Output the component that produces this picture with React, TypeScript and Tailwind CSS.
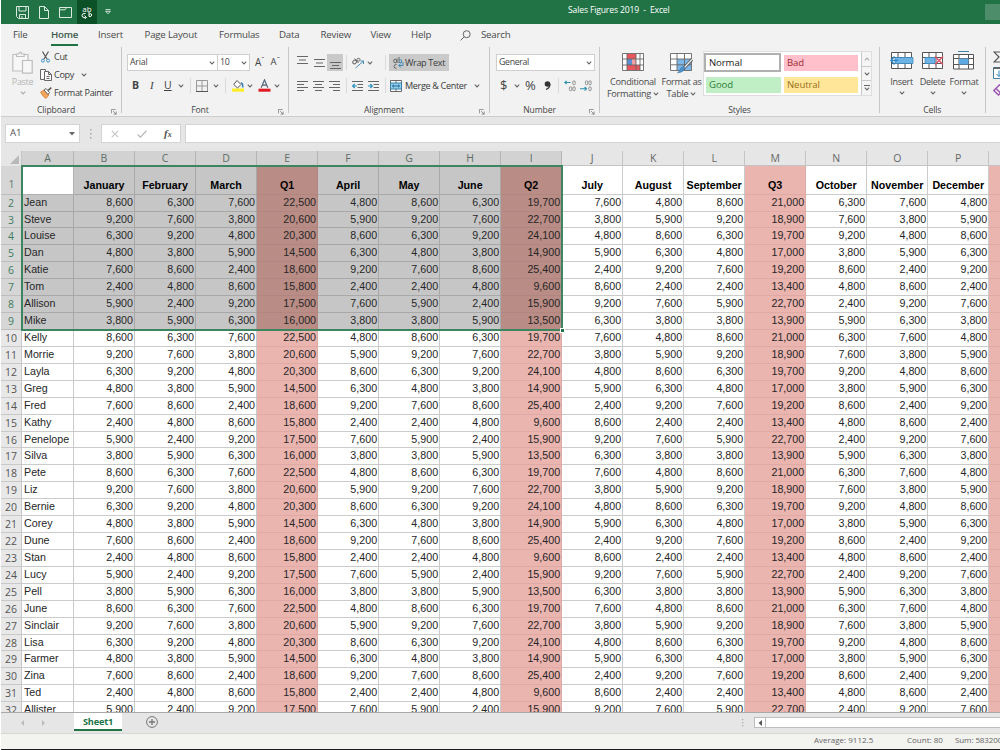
import type { ReactNode } from "react";
import clsx from "clsx";

const MONTHS = [
  "", "January", "February", "March", "Q1", "April", "May", "June", "Q2",
  "July", "August", "September", "Q3", "October", "November", "December",
];

const NAMES = [
  "Jean", "Steve", "Louise", "Dan", "Katie", "Tom", "Allison", "Mike",
  "Kelly", "Morrie", "Layla", "Greg", "Fred", "Kathy", "Penelope", "Silva",
  "Pete", "Liz", "Bernie", "Corey", "Dune", "Stan", "Lucy", "Pell",
  "June", "Sinclair", "Lisa", "Farmer", "Zina", "Ted", "Allister",
];

// Figures repeat every eight people
const FIGURES = [
  [8600, 6300, 7600, 22500, 4800, 8600, 6300, 19700, 7600, 4800, 8600, 21000, 6300, 7600, 4800],
  [9200, 7600, 3800, 20600, 5900, 9200, 7600, 22700, 3800, 5900, 9200, 18900, 7600, 3800, 5900],
  [6300, 9200, 4800, 20300, 8600, 6300, 9200, 24100, 4800, 8600, 6300, 19700, 9200, 4800, 8600],
  [4800, 3800, 5900, 14500, 6300, 4800, 3800, 14900, 5900, 6300, 4800, 17000, 3800, 5900, 6300],
  [7600, 8600, 2400, 18600, 9200, 7600, 8600, 25400, 2400, 9200, 7600, 19200, 8600, 2400, 9200],
  [2400, 4800, 8600, 15800, 2400, 2400, 4800, 9600, 8600, 2400, 2400, 13400, 4800, 8600, 2400],
  [5900, 2400, 9200, 17500, 7600, 5900, 2400, 15900, 9200, 7600, 5900, 22700, 2400, 9200, 7600],
  [3800, 5900, 6300, 16000, 3800, 3800, 5900, 13500, 6300, 3800, 3800, 13900, 5900, 6300, 3800],
];

const LETTERS = "ABCDEFGHIJKLMNOP".split("");
const COLS = "grid grid-cols-[21px_52px_repeat(15,61.03px)_12px]";

function Chevron({ className }: { className?: string }) {
  return (
    <svg viewBox="0 0 6 4" className={clsx("h-[4px] w-[6px] shrink-0", className)}>
      <path d="M0.8 0.7L3 2.9L5.2 0.7" fill="none" stroke="#666" strokeWidth="1.1" />
    </svg>
  );
}

function Launcher() {
  return (
    <svg viewBox="0 0 7 7" className="h-[6px] w-[6px]" fill="none" stroke="#777" strokeWidth="0.9">
      <path d="M0.5 5V0.5H5.5M2.5 2.5L6 6M6 3V6H3" />
    </svg>
  );
}

interface GroupProps {
  label: string;
  width: string;
  launcher?: boolean;
  children: ReactNode;
}

function Group({ label, width, launcher, children }: GroupProps) {
  return (
    <div className={clsx("flex h-[70px] shrink-0", width)}>
      <div className="flex min-w-0 flex-1 flex-col">
        <div className="h-[57px] shrink-0">{children}</div>
        <div className="flex h-[13px] items-center">
          <span className="flex-1 text-center text-[8.6px] tracking-[-0.1px] text-[#444]">{label}</span>
          {launcher && <span className="mt-[2px] w-[10px]"><Launcher /></span>}
        </div>
      </div>
      <div className="h-[66px] w-px bg-[#c6c6c6]" />
    </div>
  );
}

function Divider({ className }: { className?: string }) {
  return <span className={clsx("h-[15px] w-px shrink-0 bg-[#dadada]", className)} />;
}

function Lines({ d }: { d: string }) {
  return (
    <svg viewBox="0 0 11 12" className="h-[12px] w-[11px] shrink-0">
      <path d={d} stroke="#666" strokeWidth="1" />
    </svg>
  );
}

function TitleBar() {
  return (
    <header className="flex h-[24px] items-center bg-[#217346]">
      <div className="flex h-full w-[476px] items-center">
        <svg viewBox="0 0 13 13" className="ml-[15px] h-[13px] w-[13px]" fill="none" stroke="#dcebe2">
          <path d="M0.5 0.5H12.5V12.5H2.5L0.5 10.5ZM3 0.5V5H10V0.5M3.5 12.5V8.5H9.5V12.5M6 10V12" />
        </svg>
        <svg viewBox="0 0 10 13" className="ml-[10px] h-[13px] w-[10px]" fill="none" stroke="#dcebe2">
          <path d="M0.5 0.5H5.5L9.5 4.5V12.5H0.5ZM5.5 0.5V4.5H9.5" />
        </svg>
        <svg viewBox="0 0 13 11" className="ml-[10px] h-[11px] w-[13px]" fill="none" stroke="#dcebe2">
          <path d="M0.5 10.5V0.5H12.5V10.5ZM0.5 2.8H6L7.5 0.8" />
        </svg>
        <div className="ml-[5px] flex h-full w-[20px] flex-col items-center justify-center bg-[#0b5026] text-white">
          <span className="h-[7px] text-[8px] leading-[7px]">ab</span>
          <svg viewBox="0 0 12 7" className="h-[7px] w-[12px]" fill="none" stroke="#fff">
            <path d="M4.5 1.5H3Q1 1.5 1 3.5T3 5.5H4.5M3.5 3.5L5.5 5.5L3.5 7M8 0V4.5M8 2.5Q10.5 0.5 10.7 3Q10.5 5 8 4.5" />
          </svg>
        </div>
        <svg viewBox="0 0 6 6" className="ml-[8px] h-[6px] w-[6px]" fill="none" stroke="#dcebe2" strokeWidth="0.9">
          <path d="M0.5 0.6H5.5M0.6 2.3L3 4.8L5.4 2.3Z" />
        </svg>
      </div>
      <div className="ml-[91px] w-[110px] pb-[3px] text-[8.6px] tracking-[-0.15px] whitespace-pre text-white">Sales Figures 2019  -  Excel</div>
      <div className="ml-auto h-[16px] w-[15px] bg-[#4d8d69]" />
    </header>
  );
}

const TABS = [
  { name: "File", width: "w-[38px]" },
  { name: "Home", width: "w-[47px]" },
  { name: "Insert", width: "w-[46.5px]" },
  { name: "Page Layout", width: "w-[74.5px]" },
  { name: "Formulas", width: "w-[60px]" },
  { name: "Data", width: "w-[41.5px]" },
  { name: "Review", width: "w-[50px]" },
  { name: "View", width: "w-[40.5px]" },
  { name: "Help", width: "w-[49px]" },
];

function TabStrip() {
  return (
    <nav className="flex h-[23px] items-center pl-[12px] text-[9.7px] tracking-[-0.2px] text-[#4a4a4a]">
      {TABS.map((tab) => (
        <div key={tab.name} className={clsx("flex h-full items-center", tab.width)}>
          <span
            className={clsx(
              "flex h-[20px] items-center whitespace-nowrap",
              tab.name === "Home" && "border-b-2 border-[#217346] pt-[2px] font-semibold text-[#3c5a4a]"
            )}
          >
            {tab.name}
          </span>
        </div>
      ))}
      <svg viewBox="0 0 11 11" className="h-[11px] w-[11px]" fill="none" stroke="#666">
        <circle cx="6.7" cy="4.2" r="3.5" />
        <path d="M4.2 6.8L0.6 10.4" />
      </svg>
      <span className="ml-[10px]">Search</span>
    </nav>
  );
}

function Clipboard() {
  return (
    <Group label="Clipboard" width="w-[121px]" launcher>
      <div className="flex text-[9.1px] tracking-[-0.35px] text-[#3a3a3a]">
        <div className="flex w-[38px] flex-col items-center pt-[4px] pl-[5px] text-[#b5b5b5]">
          <svg viewBox="0 0 21 23" className="h-[23px] w-[21px]" fill="#f7f7f7" stroke="#bdbdbd" strokeWidth="1.2">
            <path d="M0.8 3.5H16V20H0.8Z" />
            <path d="M4.5 5.5V3H6.8Q8.3 -0.8 9.8 3H12.2V5.5Z" />
            <path d="M10.5 9.5H20.2V22.2H10.5Z" />
          </svg>
          <span className="mt-[2px] leading-[12px]">Paste</span>
          <Chevron className="mt-[3px] opacity-50" />
        </div>
        <div className="flex flex-col pt-[1px]">
          <div className="flex h-[18px] items-center">
            <svg viewBox="0 0 9 12" className="ml-[2px] h-[12px] w-[9px]" fill="none">
              <path d="M1.5 0.5L6 8M7.5 0.5L3 8" stroke="#555" strokeWidth="1.2" />
              <circle cx="1.9" cy="9.6" r="1.5" stroke="#3b8fc4" />
              <circle cx="7.1" cy="9.6" r="1.5" stroke="#3b8fc4" />
            </svg>
            <span className="ml-[4px]">Cut</span>
          </div>
          <div className="flex h-[18px] items-center">
            <svg viewBox="0 0 12 12" className="ml-[1px] h-[12px] w-[12px]" fill="#fafafa" stroke="#666">
              <path d="M0.5 0.5H5.5V10.5H0.5Z" />
              <path d="M4.5 2.5H8.5L11.5 5.5V11.5H4.5ZM8.5 2.5V5.5H11.5M6.5 7.5H9.5M6.5 9.5H9.5" />
            </svg>
            <span className="ml-[2px]">Copy</span>
            <Chevron className="ml-[7px]" />
          </div>
          <div className="flex h-[18px] items-center">
            <svg viewBox="0 0 12 12" className="ml-[1px] h-[12px] w-[12px]">
              <path d="M0.5 5L4 3L9 8L6 11.5Q3 10 0.5 5Z" fill="#f3a45c" stroke="#d27b30" strokeWidth="0.7" />
              <path d="M4 3L6 1.5L9.5 5.5L8 7.5Z" fill="#fff" stroke="#555" strokeWidth="0.9" />
              <path d="M8 3.5L11.3 0.6" stroke="#555" strokeWidth="1.6" />
            </svg>
            <span className="ml-[2px] whitespace-nowrap">Format Painter</span>
          </div>
        </div>
      </div>
    </Group>
  );
}

function FontGroup() {
  return (
    <Group label="Font" width="w-[167px]" launcher>
      <div className="flex flex-col pt-[7px] text-[#444]">
        <div className="flex h-[17px] items-center">
          <div className="ml-[5px] flex h-[17px] w-[91px] items-center justify-between border border-[#cfcfcf] bg-white px-[2px] text-[8.8px] tracking-[-0.2px]">
            Arial <Chevron />
          </div>
          <div className="flex h-[17px] w-[32px] items-center justify-between border border-l-0 border-[#cfcfcf] bg-white px-[2px] text-[8.8px] tracking-[-0.2px]">
            10 <Chevron />
          </div>
          <span className="ml-[5px] text-[10px]">A</span>
          <span className="mb-[7px] text-[8px] leading-[6px]">ˆ</span>
          <span className="ml-[6px] text-[9.5px]">A</span>
          <span className="mb-[7px] text-[8px] leading-[6px]">ˇ</span>
        </div>
        <div className="mt-[6px] flex h-[17px] items-center">
          <span className="ml-[10px] w-[16px] text-[10.5px] font-bold">B</span>
          <span className="w-[16px] pl-[2px] font-['Liberation_Serif',serif] text-[11px] italic">I</span>
          <span className="w-[14px] text-[10.5px] underline">U</span>
          <Chevron className="ml-0" />
          <Divider className="ml-[6px]" />
          <svg viewBox="0 0 12 12" className="ml-[5px] h-[12px] w-[12px]" fill="none" stroke="#999">
            <path d="M0.5 0.5H11.5V11.5H0.5ZM6 0.5V11.5M0.5 6H11.5" />
            <path d="M0 11.5H12" stroke="#555" />
          </svg>
          <Chevron className="ml-[5px]" />
          <Divider className="ml-[6px]" />
          <svg viewBox="0 0 12 13" className="ml-[6px] h-[13px] w-[12px]">
            <rect x="0" y="9.5" width="12" height="3.2" fill="#f9ee2b" />
            <path d="M5 1.5L9 5.5L5.5 9L1.8 5.4Z" fill="#fff" stroke="#555" />
            <path d="M9 3.5Q11.5 5 10.6 8.5" fill="none" stroke="#2b7cb8" strokeWidth="1.4" />
          </svg>
          <Chevron className="ml-[3px]" />
          <svg viewBox="0 0 13 13" className="ml-[5px] h-[13px] w-[13px]">
            <rect x="0.5" y="9.7" width="12" height="3" fill="#e01b24" />
            <path d="M3.2 8.8L6.5 0.8L9.8 8.8M4.3 6.1H8.7" fill="none" stroke="#4c6275" strokeWidth="1.1" />
          </svg>
          <Chevron className="ml-[3px]" />
        </div>
      </div>
    </Group>
  );
}

function Indent({ flip }: { flip?: boolean }) {
  return (
    <svg viewBox="0 0 11 12" className="h-[12px] w-[11px] shrink-0">
      <path d="M0 1.5H11M5.5 4.5H11M5.5 7.5H11M0 10.5H11" stroke="#666" />
      <path d={flip ? "M0 6H4M2.3 4L4.3 6L2.3 8" : "M0.8 6H5M2.7 4L0.7 6L2.7 8"} fill="none" stroke="#2b8fc4" strokeWidth="1.2" />
    </svg>
  );
}

function Alignment() {
  return (
    <Group label="Alignment" width="w-[201px]" launcher>
      <div className="flex flex-col pt-[7px] text-[9.1px] tracking-[-0.35px] text-[#3a3a3a]">
        <div className="flex h-[17px] items-center">
          <div className="mb-[4px] ml-[8px] flex"><Lines d="M0 1.5H11M2 5H9M0 8.5H11" /></div>
          <div className="ml-[6px] flex"><Lines d="M0 2.5H11M2 6H9M0 9.5H11" /></div>
          <div className="ml-[2px] flex h-[17px] w-[16px] items-end justify-center bg-[#c9c9c9]">
            <Lines d="M0 3.5H11M2 6.5H9M0 9.5H11" />
          </div>
          <Divider className="ml-[3px]" />
          <svg viewBox="0 0 13 12" className="ml-[5px] h-[12px] w-[13px]" fill="none" stroke="#666">
            <ellipse cx="2.6" cy="5" rx="2" ry="1.6" transform="rotate(-45 2.6 5)" />
            <path d="M2.5 1.5L6.5 6" />
            <ellipse cx="6.5" cy="2.7" rx="1.6" ry="1.4" />
            <path d="M3.5 11L11.5 4M11.5 7V4H8.5" stroke="#4a8fb5" />
          </svg>
          <Chevron className="ml-[2px]" />
          <Divider className="ml-[12px]" />
          <div className="ml-[3px] flex h-[17px] w-[60px] items-center bg-[#cacaca] pl-[4px]">
            <svg viewBox="0 0 11 12" className="h-[12px] w-[11px] shrink-0" fill="none" stroke="#666">
              <ellipse cx="2.2" cy="4" rx="1.5" ry="1.8" />
              <path d="M4 1.5V6M6 0V6M3.5 7.5Q1 7.5 1 9.5T3.5 11.3" />
              <path d="M6 3Q9.5 1.8 8.5 5.5H6M10 5V8.5H6M7.8 6.5L5.8 8.5L7.8 10.5" stroke="#3a8ab8" />
            </svg>
            <span className="ml-[1px] whitespace-nowrap">Wrap Text</span>
          </div>
        </div>
        <div className="mt-[6px] flex h-[17px] items-center">
          <div className="ml-[8px] flex"><Lines d="M0 1.5H11M0 4.5H7M0 7.5H11M0 10.5H7" /></div>
          <div className="ml-[5px] flex"><Lines d="M0 1.5H11M2 4.5H9M0 7.5H11M2 10.5H9" /></div>
          <div className="ml-[5px] flex"><Lines d="M0 1.5H11M4 4.5H11M0 7.5H11M4 10.5H11" /></div>
          <Divider className="ml-[6px]" />
          <div className="ml-[5px] flex"><Indent /></div>
          <div className="ml-[5px] flex"><Indent flip /></div>
          <Divider className="ml-[6px]" />
          <svg viewBox="0 0 12 12" className="ml-[4px] h-[12px] w-[12px] shrink-0" fill="none">
            <path d="M0.5 0.5H11.5V11.5H0.5ZM6 0.5V3M6 9V11.5" fill="#fff" stroke="#666" />
            <rect x="0.5" y="3" width="11" height="6" fill="#8fd0ee" stroke="#3a7fa5" />
            <path d="M2.5 6H9.5M4 4.6L2.5 6L4 7.4M8 4.6L9.5 6L8 7.4" stroke="#1f5d80" strokeWidth="0.9" />
          </svg>
          <span className="ml-[3px] w-[69px] whitespace-nowrap">Merge &amp; Center</span>
          <Chevron />
        </div>
      </div>
    </Group>
  );
}

function Decimals({ increase }: { increase?: boolean }) {
  return (
    <svg viewBox="0 0 12 12" className="h-[12px] w-[12px] shrink-0" fill="none" stroke="#8a8a8a" strokeWidth="0.9">
      <rect x="8.8" y="0.8" width="2.4" height="4" rx="1.2" />
      <rect x="8.8" y="6.8" width="2.4" height="4" rx="1.2" />
      <rect x="5.4" y={increase ? 6.8 : 0.8} width="2.4" height="4" rx="1.2" />
      <path d={increase ? "M6.5 2.5H0.8M2.6 0.8L0.8 2.5L2.6 4.2" : "M0 8.8H6.5M4.6 7L6.5 8.8L4.6 10.6"} stroke="#2b8fb0" strokeWidth="1.1" />
    </svg>
  );
}

function NumberGroup() {
  return (
    <Group label="Number" width="w-[110px]" launcher>
      <div className="flex flex-col pt-[7px] text-[#444]">
        <div className="ml-[6px] flex h-[17px] w-[99px] items-center justify-between border border-[#cfcfcf] bg-white px-[2px] text-[8.8px] tracking-[-0.35px]">
          General <Chevron />
        </div>
        <div className="mt-[6px] flex h-[17px] items-center">
          <span className="ml-[10px] w-[14px] text-[13px]">$</span>
          <Chevron />
          <span className="ml-[5px] w-[19px] text-[13px]">%</span>
          <svg viewBox="0 0 7 9" className="h-[9px] w-[7px]">
            <circle cx="3.5" cy="3" r="2.8" fill="#333" />
            <path d="M6 3Q6 7 2 8.5" fill="none" stroke="#333" strokeWidth="1.2" />
          </svg>
          <Divider className="ml-[7px]" />
          <div className="ml-[5px] flex gap-[4px]">
            <Decimals increase />
            <Decimals />
          </div>
        </div>
      </div>
    </Group>
  );
}

function Styles() {
  return (
    <Group label="Styles" width="w-[280px]">
      <div className="flex text-[9.2px] leading-[12px] tracking-[-0.3px] text-[#4a4a4a]">
        <div className="ml-[6px] flex w-[54px] flex-col items-center pt-[6px]">
          <svg viewBox="0 0 22 18" className="h-[18px] w-[22px]" fill="none">
            <rect x="0.5" y="0.5" width="21" height="17" fill="#fff" />
            <path d="M5 1H14V6H5ZM5 12H18V17H5Z" fill="#e8555a" />
            <path d="M5 6H10V12H5Z" fill="#5b8fd0" />
            <path d="M10 6H14V12H10Z" fill="#f0a0a4" />
            <path d="M0.5 0.5H21.5V17.5H0.5ZM5 0.5V17.5M14 0.5V17.5M18 0.5V17.5M0.5 6H21.5M0.5 12H21.5" stroke="#666" strokeWidth="0.9" />
          </svg>
          <span className="mt-[5px]">Conditional</span>
          <span className="flex items-center gap-[2px] whitespace-nowrap">Formatting <Chevron /></span>
        </div>
        <div className="flex w-[43px] flex-col items-center pt-[6px]">
          <svg viewBox="0 0 23 21" className="-mb-[3px] h-[21px] w-[23px]" fill="none">
            <rect x="0.5" y="0.5" width="21" height="17" fill="#fff" />
            <path d="M7 6H21.5V17.5H7Z" fill="#7db7e8" />
            <path d="M0.5 0.5H21.5V17.5H0.5ZM7 0.5V17.5M14.5 0.5V17.5M0.5 6H21.5M0.5 11.8H21.5" stroke="#666" strokeWidth="0.9" />
            <path d="M22 6.5L13.5 15.5" stroke="#555" strokeWidth="3" />
            <path d="M22 6.5L14 15" stroke="#e8eef2" strokeWidth="1.3" />
            <path d="M14.5 14Q14.5 19.5 7.5 19.8Q10 18 10.5 15.5Q12.5 13 14.5 14Z" fill="#4a93cf" stroke="#3874a5" strokeWidth="0.6" />
          </svg>
          <span className="mt-[5px] whitespace-nowrap">Format as</span>
          <span className="flex items-center gap-[2px]">Table <Chevron /></span>
        </div>
        <div className="mt-[4px] flex h-[45px] w-[169px] border border-[#dedede] bg-white">
          <div className="grid w-[157px] grid-cols-[77px_74px] gap-x-[3px] gap-y-[3px] pt-[1px] text-[9.6px] tracking-[-0.1px]">
            <div className="flex h-[19px] items-center border-2 border-[#b0b0b0] bg-white pl-[3px] text-[#222]">Normal</div>
            <div className="mt-[2px] flex h-[16px] items-center bg-[#ffc0cb] pl-[3px] text-[#9c2a35]">Bad</div>
            <div className="ml-[2px] flex h-[16px] items-center bg-[#c0efc5] pl-[3px] text-[#2e7d3a]">Good</div>
            <div className="flex h-[16px] items-center bg-[#ffe699] pl-[3px] text-[#98701a]">Neutral</div>
          </div>
          <div className="flex flex-1 flex-col divide-y divide-[#c8c8c8] border-l border-[#c8c8c8] bg-[#f5f5f5]">
            <div className="flex flex-1 items-center justify-center"><Chevron className="rotate-180 opacity-50" /></div>
            <div className="flex flex-1 items-center justify-center"><Chevron /></div>
            <div className="flex flex-1 flex-col items-center justify-center gap-px">
              <span className="h-px w-[6px] bg-[#666]" />
              <Chevron />
            </div>
          </div>
        </div>
      </div>
    </Group>
  );
}

const SHEET_GRID = "M1.5 1.5H21.5V17.5H1.5ZM8 1.5V17.5M15 1.5V17.5M1.5 6.5H21.5M1.5 12.5H21.5";

function Cells() {
  return (
    <Group label="Cells" width="w-[105.5px]">
      <div className="flex pt-[4px] pl-[7px] text-[9.1px] leading-[12px] tracking-[-0.3px] text-[#4a4a4a]">
        <div className="flex w-[29px] flex-col items-center">
          <svg viewBox="0 0 24 19" className="h-[19px] w-[24px]" fill="none">
            <path d={SHEET_GRID} fill="#fff" stroke="#555" />
            <path d="M5 6.5H23V12.5H5Z" fill="#6db3e6" stroke="#3f8ac0" strokeWidth="0.8" />
            <path d="M0.5 9.5H8M4.5 5.5L0.8 9.5L4.5 13.5" stroke="#2f85c4" strokeWidth="1.3" />
          </svg>
          <span className="mt-[6px]">Insert</span>
          <Chevron className="mt-[3px]" />
        </div>
        <div className="flex w-[33px] flex-col items-center">
          <svg viewBox="0 0 24 19" className="h-[19px] w-[24px]" fill="none">
            <path d={SHEET_GRID} fill="#fff" stroke="#555" />
            <path d="M4 6.5H14V12.5H4Z" fill="#6db3e6" stroke="#3f8ac0" strokeWidth="0.8" />
            <path d="M14 5.5L22 13.5M22 5.5L14 13.5" stroke="#e0566a" strokeWidth="1.5" />
          </svg>
          <span className="mt-[6px]">Delete</span>
          <Chevron className="mt-[3px]" />
        </div>
        <div className="flex w-[30px] flex-col items-center">
          <svg viewBox="0 0 24 19" className="h-[19px] w-[24px]" fill="none">
            <path d="M1.5 3.5H21.5V18H1.5ZM7 3.5V18M16.5 3.5V18M1.5 7.5H21.5M1.5 13.5H21.5" fill="#fff" stroke="#555" />
            <rect x="7" y="7.5" width="9.5" height="6" fill="#5fa9e3" />
            <path d="M6 0.5H17" stroke="#3d86a8" />
          </svg>
          <span className="mt-[6px]">Format</span>
          <Chevron className="mt-[3px]" />
        </div>
      </div>
    </Group>
  );
}

function Editing() {
  return (
    <div className="flex flex-1 flex-col overflow-hidden pt-[4px] pl-[7px]">
      <svg viewBox="0 0 12 12" className="h-[12px] w-[12px] shrink-0" fill="none" stroke="#555" strokeWidth="1.2">
        <path d="M11 1H1L6 6L1 11H11" />
      </svg>
      <svg viewBox="0 0 12 12" className="mt-[4px] h-[12px] w-[12px] shrink-0" fill="none">
        <path d="M0.5 0.5H11.5V11.5H0.5Z" fill="#fff" stroke="#4a7c9c" />
        <path d="M0.5 1.2H11.5" stroke="#555" strokeWidth="1.4" />
        <path d="M6 3.5V9.5M3.5 7L6 9.5L8.5 7" stroke="#2b84c0" />
      </svg>
      <svg viewBox="0 0 12 12" className="mt-[5px] h-[12px] w-[12px] shrink-0" fill="none" stroke="#9b4fb0" strokeWidth="1.3">
        <path d="M0.8 6.5L6.5 0.8L11 5.3L5.5 11ZM3 4.5L7.5 9" />
      </svg>
    </div>
  );
}

function FormulaBar() {
  return (
    <div className="flex h-[34px] items-start bg-[#e6e6e6] pt-[7px] text-[#555]">
      <div className="ml-[4px] flex h-[19px] w-[75px] items-center justify-between border border-[#d4d4d4] bg-white px-[4px] text-[9.6px]">
        A1
        <svg viewBox="0 0 6 4" className="h-[4px] w-[6px]"><path d="M0 0H6L3 3.5Z" fill="#666" /></svg>
      </div>
      <svg viewBox="0 0 2 10" className="mt-[5px] ml-[10px] h-[10px] w-[2px]" fill="#aaa">
        <path d="M0 0H1.5V1.5H0ZM0 4H1.5V5.5H0ZM0 8H1.5V9.5H0Z" />
      </svg>
      <div className="ml-[9px] flex h-[19px] w-[80px] items-center border border-[#d4d4d4] bg-white">
        <svg viewBox="0 0 8 8" className="ml-[9px] h-[8px] w-[8px]"><path d="M0.8 0.8L7.2 7.2M7.2 0.8L0.8 7.2" stroke="#c4c4c4" strokeWidth="1.1" /></svg>
        <svg viewBox="0 0 10 8" className="ml-[18px] h-[8px] w-[10px]"><path d="M0.6 4.5L3.4 7.2L9.4 0.8" fill="none" stroke="#bbb" strokeWidth="1.3" /></svg>
        <span className="ml-[17px] font-['Liberation_Serif',serif] text-[11px] font-bold italic">f<span className="text-[8px]">x</span></span>
      </div>
      <div className="ml-[4px] h-[19px] flex-1 border border-r-0 border-[#d4d4d4] bg-white" />
    </div>
  );
}

function isTotal(col: number) {
  return col > 0 && col % 4 === 0;
}

// Selected range is A1:I9
function isSelected(row: number, col: number) {
  return row <= 9 && col <= 8;
}

function cellClass(row: number, col: number) {
  const selected = isSelected(row, col);
  if (row === 1 && col === 0) return "bg-white border-[#b0b0b0]";
  if (selected && isTotal(col)) return "bg-[#b98c85] border-[#b18580]";
  if (selected) return "bg-[#c6c6c6] border-[#a8a8a8]";
  if (isTotal(col)) return "bg-[#eab4af] border-[#dfaaa5]";
  return "bg-white border-[#cbcbcb]";
}

function Sheet() {
  return (
    <div className="relative h-[561px] overflow-hidden bg-[#e6e6e6] font-['Liberation_Sans',Arial,sans-serif] text-[10.7px] text-[#262626]">
      <div className={clsx(COLS, "h-[15px] grid-rows-[15px] font-['Open_Sans',sans-serif] text-[10.5px] leading-[15px] text-[#666]")}>
        <div className="flex items-end justify-end border-r border-[#c4c4c4] pr-[2px] pb-[2px]">
          <svg viewBox="0 0 9 9" className="h-[9px] w-[9px]"><path d="M9 0V9H0Z" fill="#b9b9b9" /></svg>
        </div>
        {LETTERS.map((letter, col) => (
          <div
            key={letter}
            className={clsx(
              "border-r border-b text-center",
              col <= 8 ? "border-[#b5b5b5] bg-[#d2d2d2] text-[#5c6e65]" : "border-[#c4c4c4] bg-[#e6e6e6]"
            )}
          >
            {letter}
          </div>
        ))}
        <div className="border-b border-[#c4c4c4]" />
      </div>

      <div className={clsx(COLS, "h-[28.6px] grid-rows-[28.6px] font-bold text-black")}>
        <div className="flex items-center justify-center border-b border-[#bdbdbd] bg-[#d6d6d6] pt-[11px] font-['Open_Sans',sans-serif] text-[10.5px] font-normal text-[#5c7a6b]">1</div>
        {MONTHS.map((month, col) => (
          <div key={col} className={clsx("flex items-end justify-center border-r border-b pb-[2px] leading-[14px]", cellClass(1, col))}>
            {month}
          </div>
        ))}
        <div className="border-b border-[#dfaaa5] bg-[#eab4af]" />
      </div>

      {NAMES.map((name, i) => {
        const row = i + 2;
        return (
          <div key={name} className={clsx(COLS, "h-[16.93px] grid-rows-[16.93px] leading-[14.2px]")}>
            <div
              className={clsx(
                "border-r border-b text-center font-['Open_Sans',sans-serif] text-[10.5px] leading-[17.5px]",
                row <= 9 ? "border-[#bdbdbd] bg-[#d6d6d6] text-[#3f7d61]" : "border-[#c9c9c9] bg-[#e8e8e8] text-[#555]"
              )}
            >
              {row}
            </div>
            <div className={clsx("border-r border-b pl-[2px]", cellClass(row, 0))}>{name}</div>
            {FIGURES[i % 8].map((value, j) => (
              <div key={j} className={clsx("border-r border-b pr-[1px] text-right", cellClass(row, j + 1))}>
                {value.toLocaleString("en-US")}
              </div>
            ))}
            <div className="border-b border-[#dfaaa5] bg-[#eab4af]" />
          </div>
        );
      })}

      {/* Selection outline and fill handle */}
      <div className="absolute top-[14px] left-[20px] h-[166px] w-[542px] border-2 border-[#3d8560]" />
      <div className="absolute top-[177px] left-[559px] box-content h-[3px] w-[3px] border border-white bg-[#217346]" />
    </div>
  );
}

function SheetTabs() {
  return (
    <div className="flex h-[21px] items-start border-t border-[#a9a9a9] bg-[#e6e6e6]">
      <svg viewBox="0 0 26 6" className="mt-[7px] ml-[19px] h-[6px] w-[26px]" fill="#bbb">
        <path d="M4 0V6L1 3ZM22 0V6L25 3Z" />
      </svg>
      <div className="ml-[28px] flex h-[18px] w-[48px] items-center justify-center border-b-2 border-[#217346] bg-white pt-[2px] text-[9.2px] font-bold tracking-[-0.2px] text-[#217346]">
        Sheet1
      </div>
      <svg viewBox="0 0 12 12" className="mt-[3px] ml-[24px] h-[12px] w-[12px]" fill="none" stroke="#777">
        <circle cx="6" cy="6" r="5.4" />
        <path d="M6 3V9M3 6H9" strokeWidth="1.3" />
      </svg>
      <svg viewBox="0 0 2 8" className="mt-[6px] ml-auto h-[8px] w-[2px]" fill="#aaa">
        <path d="M0 0H1.3V1.3H0ZM0 3H1.3V4.3H0ZM0 6H1.3V7.3H0Z" />
      </svg>
      <div className="mt-[4px] ml-[10px] flex h-[11px] w-[246px] border border-r-0 border-[#bdbdbd] bg-white">
        <div className="flex w-[11px] items-center justify-center border-r border-[#bdbdbd]">
          <svg viewBox="0 0 4 6" className="h-[6px] w-[4px]"><path d="M4 0V6L0.5 3Z" fill="#555" /></svg>
        </div>
      </div>
    </div>
  );
}

export default function App() {
  return (
    <div className="h-[750px] w-[1000px] overflow-hidden bg-white pl-px font-['Open_Sans','Noto_Sans',sans-serif]">
      <TitleBar />
      <div className="h-[93px] border-b border-[#cdcdcd] bg-[#f2f2f2]">
        <TabStrip />
        <div className="flex">
          <Clipboard />
          <FontGroup />
          <Alignment />
          <NumberGroup />
          <Styles />
          <Cells />
          <Editing />
        </div>
      </div>
      <FormulaBar />
      <Sheet />
      <SheetTabs />
      <div className="flex h-[16px] items-center overflow-hidden border-t border-[#d6d6d6] bg-[#f3f3f0] pb-[3px] pl-[813px] text-[8px] whitespace-nowrap text-[#666]">
        <span className="w-[93px] shrink-0">Average: 9112.5</span>
        <span className="w-[48px] shrink-0">Count: 80</span>
        <span className="tracking-[-0.1px]">Sum: 583200</span>
      </div>
      <div className="h-[2px] bg-[#1c1c1c]" />
    </div>
  );
}
